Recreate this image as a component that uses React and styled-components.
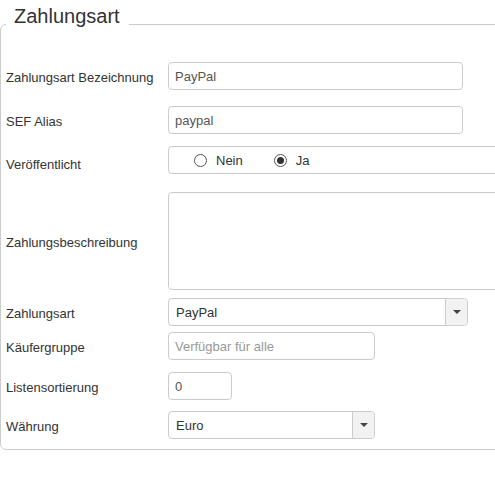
import React from 'react';
import styled, {createGlobalStyle} from 'styled-components';


const GlobalStyle = createGlobalStyle`
    html, body {
        margin: 0;
        padding: 0;
        background: #fff;
        overflow: hidden;
    }
    body {
        font-family: "Liberation Sans", Arial, sans-serif;
        font-size: 13px;
        color: #333;
    }
`;


export default () => {

    return(
        <>
        <GlobalStyle/>
        <Fieldset>
            <Legend>Zahlungsart</Legend>

            <Row top={14}>
                <Label>Zahlungsart Bezeichnung</Label>
                <TextInput width={295} defaultValue="PayPal"/>
            </Row>

            <Row top={16}>
                <Label>SEF Alias</Label>
                <TextInput width={295} defaultValue="paypal"/>
            </Row>

            <Row top={12}>
                <Label shift={10}>Veröffentlicht</Label>
                <RadioGroup>
                    <RadioOption>
                        <RadioDot/>
                        Nein
                    </RadioOption>
                    <RadioOption>
                        <RadioDot checked/>
                        Ja
                    </RadioOption>
                </RadioGroup>
            </Row>

            <Row top={18}>
                <Label>Zahlungsbeschreibung</Label>
                <TextArea/>
            </Row>

            <Row top={8}>
                <Label>Zahlungsart</Label>
                <Select width={300}>
                    <SelectValue>PayPal</SelectValue>
                    <SelectButton><Caret/></SelectButton>
                </Select>
            </Row>

            <Row top={6}>
                <Label>Käufergruppe</Label>
                <TextInput width={207} placeholder="Verfügbar für alle"/>
            </Row>

            <Row top={12}>
                <Label>Listensortierung</Label>
                <TextInput width={64} defaultValue="0"/>
            </Row>

            <Row top={11}>
                <Label>Währung</Label>
                <Select width={207}>
                    <SelectValue>Euro</SelectValue>
                    <SelectButton><Caret/></SelectButton>
                </Select>
            </Row>
        </Fieldset>
        </>
    );

};


const Fieldset = styled.fieldset`
    margin: 0;
    padding: 0 0 10px 5px;
    width: 560px;
    min-width: 0;
    box-sizing: border-box;
    border: 1px solid #ccc;
    border-radius: 6px;
`;

const Legend = styled.legend`
    margin: 0;
    padding: 2px 9px 18px 8px;
    font-size: 20px;
    line-height: 28px;
    color: #333;
`;

const Row = styled.div`
    display: grid;
    grid-template-columns: 162px 1fr;
    align-items: center;
    margin-top: ${props => props.top}px;
`;

const Label = styled.label`
    padding-top: ${props => props.shift || 4}px;
    line-height: 18px;
    color: #333;
`;

const TextInput = styled.input`
    box-sizing: border-box;
    width: ${props => props.width}px;
    height: 28px;
    margin: 0;
    padding: 0 6px;
    border: 1px solid #ccc;
    border-radius: 4px;
    font-family: "Liberation Sans", Arial, sans-serif;
    font-size: 13px;
    color: #555;
    outline: none;

    &::placeholder {
        color: #999;
    }
`;

const RadioGroup = styled.div`
    box-sizing: border-box;
    width: 360px;
    height: 28px;
    display: flex;
    align-items: center;
    gap: 31px;
    padding-left: 25px;
    border: 1px solid #ccc;
    border-radius: 4px;
    color: #333;
`;

const RadioOption = styled.span`
    display: flex;
    align-items: center;
    gap: 9px;
`;

const RadioDot = styled.span`
    box-sizing: border-box;
    width: 13px;
    height: 13px;
    border: 1px solid #555;
    border-radius: 50%;
    display: flex;
    align-items: center;
    justify-content: center;

    &::after {
        content: '';
        display: ${props => props.checked ? 'block' : 'none'};
        width: 7px;
        height: 7px;
        border-radius: 50%;
        background: #333;
    }
`;

const TextArea = styled.textarea`
    box-sizing: border-box;
    width: 360px;
    height: 98px;
    margin: 0;
    border: 1px solid #ccc;
    border-radius: 4px;
    resize: none;
    outline: none;
`;

const Select = styled.div`
    box-sizing: border-box;
    width: ${props => props.width}px;
    height: 28px;
    display: flex;
    border: 1px solid #ccc;
    border-radius: 4px;
    overflow: hidden;
`;

const SelectValue = styled.span`
    flex: 1;
    display: flex;
    align-items: center;
    padding-left: 7px;
    color: #333;
`;

const SelectButton = styled.span`
    width: 21px;
    display: flex;
    align-items: center;
    justify-content: center;
    background: #f2f2f2;
    border-left: 1px solid #ccc;
`;

const Caret = styled.span`
    width: 0;
    height: 0;
    border-left: 4px solid transparent;
    border-right: 4px solid transparent;
    border-top: 4px solid #444;
`;
